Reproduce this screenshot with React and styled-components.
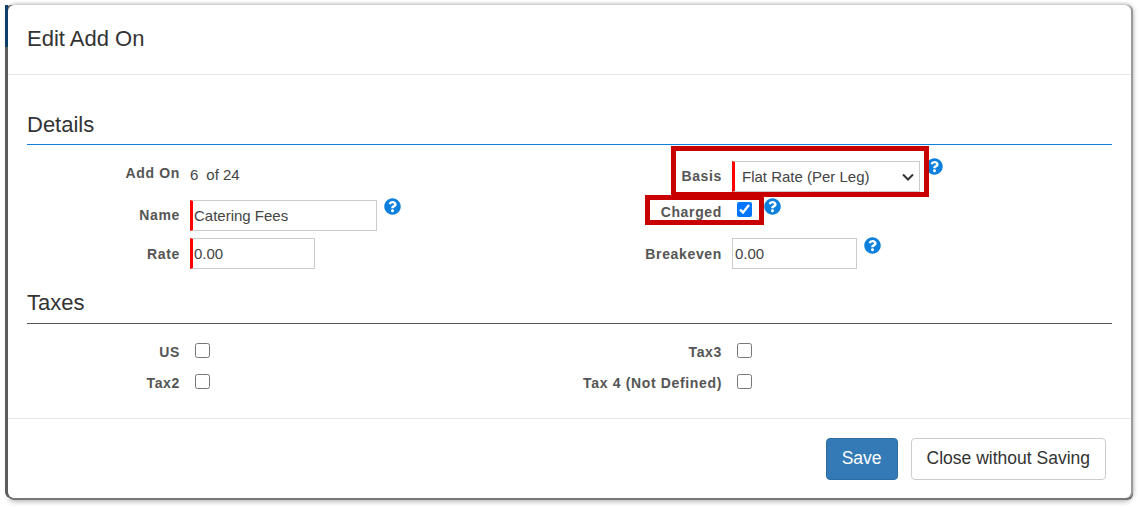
import React from "react";
import styled, { createGlobalStyle } from "styled-components";
import { FaQuestionCircle } from "react-icons/fa";

const GlobalStyle = createGlobalStyle`
    html, body {
        margin: 0;
        padding: 0;
        background: #fff;
        font-family: "Liberation Sans", Arial, sans-serif;
        color: #333;
    }
`;

const Page = styled.div`
    width: 1140px;
    height: 507px;
    padding: 5px 0 0 8px;
    box-sizing: border-box;
    overflow: hidden;
`;

const Modal = styled.div`
    position: relative;
    width: 1123px;
    height: 493px;
    box-sizing: border-box;
    background: #fff;
    border-radius: 6px;
    display: flex;
    flex-direction: column;
    box-shadow: -3px 0 0 #5c5c5c, 2px 0 0 #9a9a9a, 0 2px 0 #777, 2px 2px 0 #666, 0 4px 5px rgba(0, 0, 0, 0.25),
        3px 0 4px rgba(0, 0, 0, 0.2), 0 -2px 3px rgba(0, 0, 0, 0.12);
`;

const NavyEdge = styled.div`
    position: absolute;
    left: -3px;
    top: 0;
    width: 3px;
    height: 42px;
    background: #0f3f68;
`;

const Header = styled.div`
    height: 70px;
    padding: 0 19px 2px;
    box-sizing: border-box;
    border-bottom: 1px solid #e5e5e5;
    display: flex;
    align-items: center;
`;

const Title = styled.h4`
    margin: 0;
    font-size: 22px;
    font-weight: 400;
    color: #333;
`;

const Body = styled.div`
    flex: 1;
    padding: 37px 19px 0 19px;
`;

const SectionTitle = styled.div`
    font-size: 22px;
    line-height: 26px;
    padding-bottom: ${(p) => p.$gap}px;
    margin-top: ${(p) => p.$top || 0}px;
    border-bottom: 1px solid ${(p) => p.$line};
`;

const FormGrid = styled.div`
    display: grid;
    grid-template-columns: 542px 543px;
    grid-template-rows: ${(p) => p.$rows};
    margin-top: ${(p) => p.$top}px;
`;

const Field = styled.div`
    display: flex;
    align-items: flex-start;
    height: 31px;
`;

const Label = styled.label`
    width: 153px;
    flex-shrink: 0;
    text-align: right;
    font-size: 14px;
    font-weight: 700;
    letter-spacing: 0.65px;
    color: #555;
    margin-right: 10px;
    margin-top: ${(p) => p.$mt || 0}px;
`;

const Value = styled.div`
    display: flex;
    gap: 8px;
    font-size: 15px;
    color: #444;
    margin-top: 5px;
`;

const TextInput = styled.input`
    width: ${(p) => p.$width}px;
    height: 31px;
    box-sizing: border-box;
    padding: 0 0 0 ${(p) => (p.$required ? 1 : 2)}px;
    border: 1px solid #ccc;
    border-left: ${(p) => (p.$required ? "3px solid #f00" : "1px solid #ccc")};
    border-radius: 0;
    font-family: inherit;
    font-size: 15px;
    color: #444;
    outline: none;
`;

const chevron = encodeURIComponent(
    '<svg xmlns="http://www.w3.org/2000/svg" width="12" height="8" viewBox="0 0 12 8"><path d="M1 1.5l5 5 5-5" fill="none" stroke="#333" stroke-width="2"/></svg>',
);

const Select = styled.select`
    appearance: none;
    width: 188px;
    height: 31px;
    box-sizing: border-box;
    padding: 0 0 0 7px;
    border: 1px solid #ccc;
    border-left: 3px solid #f00;
    border-radius: 0;
    background: #fff url("data:image/svg+xml,${chevron}") no-repeat right 5px center;
    font-family: inherit;
    font-size: 15px;
    color: #444;
    outline: none;
`;

const Check = styled.input.attrs({ type: "checkbox" })`
    width: 15px;
    height: 15px;
    margin: ${(p) => p.$mt || 0}px 0 0 5px;
    accent-color: #0075ff;
`;

const Help = styled(FaQuestionCircle)`
    flex-shrink: 0;
    width: 17px;
    height: 17px;
    color: #0d7fdd;
    margin-left: ${(p) => p.$left}px;
    margin-top: ${(p) => p.$top}px;
    background: radial-gradient(circle, #fff 55%, transparent 60%);
`;

const Footer = styled.div`
    height: 80px;
    box-sizing: border-box;
    border-top: 1px solid #e5e5e5;
    padding: 19px 25px 0 0;
    display: flex;
    justify-content: flex-end;
    align-items: flex-start;
    gap: 13px;
`;

const Button = styled.button`
    height: 42px;
    padding: 0 15px 2px;
    border-radius: 4px;
    border: 1px solid ${(p) => (p.$primary ? "#2e6da4" : "#ccc")};
    background: ${(p) => (p.$primary ? "#337ab7" : "#fff")};
    color: ${(p) => (p.$primary ? "#fff" : "#333")};
    font-family: inherit;
    font-size: 17.5px;
`;

const Highlight = styled.div`
    position: absolute;
    left: ${(p) => p.$x}px;
    top: ${(p) => p.$y}px;
    width: ${(p) => p.$w}px;
    height: ${(p) => p.$h}px;
    box-sizing: border-box;
    border: 5px solid #c80000;
    pointer-events: none;
`;

const App = () => {
    return (
        <Page>
            <GlobalStyle />
            <Modal>
                <NavyEdge />
                <Header>
                    <Title>Edit Add On</Title>
                </Header>
                <Body>
                    <SectionTitle $line="#0d7fdd" $gap={6}>
                        Details
                    </SectionTitle>
                    <FormGrid $rows="39px 38px 31px" $top={16}>
                        <Field>
                            <Label $mt={4}>Add On</Label>
                            <Value>
                                <span>6</span>
                                <span>of 24</span>
                            </Value>
                        </Field>
                        <Field>
                            <Label $mt={7}>Basis</Label>
                            <Select defaultValue="flat">
                                <option value="flat">Flat Rate (Per Leg)</option>
                            </Select>
                            <Help $left={6} $top={-3} />
                        </Field>
                        <Field>
                            <Label $mt={7}>Name</Label>
                            <TextInput $required $width={187} defaultValue="Catering Fees" />
                            <Help $left={7} $top={-2} />
                        </Field>
                        <Field>
                            <Label $mt={4}>Charged</Label>
                            <Check defaultChecked $mt={2} />
                            <Help $left={12} $top={-2} />
                        </Field>
                        <Field>
                            <Label $mt={8}>Rate</Label>
                            <TextInput $required $width={125} defaultValue="0.00" />
                        </Field>
                        <Field>
                            <Label $mt={8}>Breakeven</Label>
                            <TextInput $width={125} defaultValue="0.00" />
                            <Help $left={7} $top={-1} />
                        </Field>
                    </FormGrid>
                    <SectionTitle $line="#555" $top={21} $gap={7}>
                        Taxes
                    </SectionTitle>
                    <FormGrid $rows="31px 31px" $top={18}>
                        <Field>
                            <Label $mt={2}>US</Label>
                            <Check $mt={1} />
                        </Field>
                        <Field>
                            <Label $mt={2}>Tax3</Label>
                            <Check $mt={1} />
                        </Field>
                        <Field>
                            <Label $mt={2}>Tax2</Label>
                            <Check $mt={1} />
                        </Field>
                        <Field>
                            <Label $mt={2}>Tax 4 (Not Defined)</Label>
                            <Check $mt={1} />
                        </Field>
                    </FormGrid>
                </Body>
                <Footer>
                    <Button $primary>Save</Button>
                    <Button>Close without Saving</Button>
                </Footer>
                <Highlight $x={663} $y={141} $w={258} $h={51} />
                <Highlight $x={637} $y={190} $w={119} $h={30} />
            </Modal>
        </Page>
    );
};

export default App;
